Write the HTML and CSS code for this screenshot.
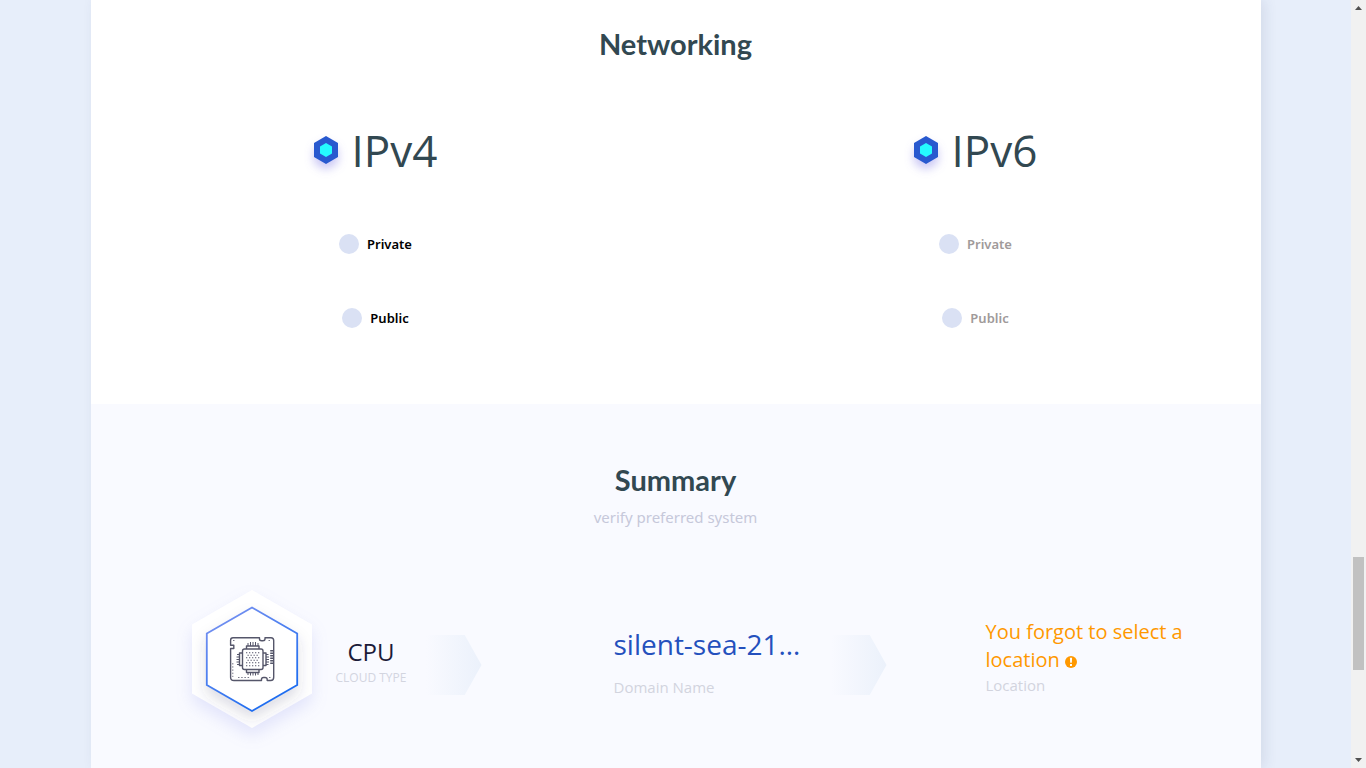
FILE: index.html
```html
<!DOCTYPE html>
<html lang="en">
<head>
<meta charset="utf-8">
<title>Networking and Summary</title>
<link rel="stylesheet" href="styles.css">
</head>
<body>
<div class="viewport">
  <main class="content">
    <div class="sheet">
      <section class="networking">
        <h2 class="title">Networking</h2>
        <div class="protocols">
          <fieldset class="protocol">
            <legend class="protocol-name">
              <svg class="bullet" width="24" height="28" viewBox="0 0 24 28" aria-hidden="true"><path fill="#2859cf" d="M12 0l12 7v14l-12 7L0 21V7z"/><path fill="#25fcff" d="M12 7l6 3.500v7L12 21l-6-3.500v-7z"/></svg>
              <span>IPv4</span>
            </legend>
            <label class="option"><input type="radio" name="ipv4"><span>Private</span></label>
            <label class="option"><input type="radio" name="ipv4"><span>Public</span></label>
          </fieldset>
          <fieldset class="protocol muted">
            <legend class="protocol-name">
              <svg class="bullet" width="24" height="28" viewBox="0 0 24 28" aria-hidden="true"><path fill="#2859cf" d="M12 0l12 7v14l-12 7L0 21V7z"/><path fill="#25fcff" d="M12 7l6 3.500v7L12 21l-6-3.500v-7z"/></svg>
              <span>IPv6</span>
            </legend>
            <label class="option"><input type="radio" name="ipv6"><span>Private</span></label>
            <label class="option"><input type="radio" name="ipv6"><span>Public</span></label>
          </fieldset>
        </div>
      </section>
      <section class="summary">
        <h2 class="title">Summary</h2>
        <p class="subtitle">verify preferred system</p>
        <div class="steps">
          <div class="step cloud">
            <svg class="badge" width="120" height="138" viewBox="0 0 120 138" aria-hidden="true">
              <defs>
                <linearGradient id="edge" x1="0" y1="0" x2="0.6" y2="1"><stop offset="0" stop-color="#7f94f0"/><stop offset="1" stop-color="#1c6cf0"/></linearGradient>
                <filter id="soft" x="-40%" y="-40%" width="180%" height="180%"><feDropShadow dx="0" dy="8" stdDeviation="7" flood-color="#3a3f6a" flood-opacity="0.17"/></filter>
                <clipPath id="hex"><path d="M60 0l60 34.500v69L60 138 0 103.500v-69z"/></clipPath>
              </defs>
              <path fill="#fff" d="M60 0l60 34.500v69L60 138 0 103.500v-69z"/>
              <g clip-path="url(#hex)"><path fill="#fff" filter="url(#soft)" d="M60 17l46 26v52l-46 26-46-26V43z"/></g>
              <path fill="#fff" stroke="url(#edge)" stroke-width="1.800" d="M60 17.500l45.200 26v51.500L60 121 14.800 95V43.500z"/>
              <g fill="none" stroke="#55566a" stroke-width="1.400" stroke-linejoin="round">
                <path d="M41 47.700h26.500v1.200q0 1.800 2.200 1.800h1q2.300 0 2.300-1.800v-1.200h6q2.700 0 2.700 2.800v36.700q0 3.300-3 3.300h-3.500v-1q0-2-2.200-2h-1.500q-2 0-2 2v1H42q-3.400 0-3.400-3V58.500h3.200v-3.300h-3.200v-5q0-2.500 2.400-2.500z"/>
                <rect x="50.500" y="59" width="20.500" height="20.500" rx="2"/>
                <path d="M54.500 59v-3h12.500v3M54.500 79.500v3h12.500v-3M50.500 63h-3v12.500h3M71 63h3v12.500h-3"/>
                <path d="M56 56v-3M58.500 56v-4M61 56v-4M63.500 56v-4M66 56v-3M56 82.500v2.500M58.500 82.500v3M61 82.500v3M63.500 82.500v3M66 82.500v2.500M47.500 64.500h-2.500M47.500 67h-3M47.500 69.500h-3M47.500 72h-3M47.500 74.500h-2.500M74 64.500h2.500M74 67h3M74 69.500h3M74 72h3M74 74.500h2.500" stroke-width="1"/>
                <path d="M79.700 60v14" stroke-width="3" stroke-dasharray="1.500 1"/>
                <path d="M54 62.800h14M54 67.800h14M54 72.800h14" stroke-width="1.100" stroke-dasharray="1.300 1.700"/>
                <path d="M55.500 65.300h12M55.500 70.300h12M54 75.800h14" stroke-width="1.100" stroke-dasharray="1.300 1.700"/>
                <path d="M46 87.500h12M40.800 73v14M41 50.500h2M76.500 50.500h2M77 87.500h2" stroke-width="0.800" stroke-dasharray="1.500 1.700"/>
              </g>
            </svg>
            <div class="cloud-text"><div class="cloud-value">CPU</div><div class="cloud-caption">CLOUD TYPE</div></div>
            <div class="arrow"></div>
          </div>
          <div class="step domain">
            <div class="domain-text"><div class="domain-value">silent-sea-21…</div><div class="caption">Domain Name</div></div>
            <div class="arrow"></div>
          </div>
          <div class="step location">
            <div class="location-value">You forgot to select a location <svg class="alert" width="12" height="12" viewBox="0 0 12 12" aria-hidden="true"><circle cx="6" cy="6" r="6" fill="#ff9800"/><path fill="#fff" d="M4.900 1.800h2.200l-.3 5H5.200zM5 8h2v2H5z"/></svg></div>
            <div class="caption">Location</div>
          </div>
        </div>
      </section>
    </div>
  </main>
  <div class="scrollbar" aria-hidden="true">
    <svg width="15" height="15" viewBox="0 0 15 15"><path fill="#505050" d="M4 10l3.500-4L11 10z"/></svg>
    <div class="track"><div class="thumb"></div></div>
    <svg width="15" height="15" viewBox="0 0 15 15"><path fill="#505050" d="M4 5l3.500 4L11 5z"/></svg>
  </div>
</div>
</body>
</html>
```
FILE: styles.css
```css
* { box-sizing: border-box; }
body {
  margin: 0;
  font-family: "Open Sans", "Noto Sans", sans-serif;
  background: #e7eefa;
}
.viewport { display: flex; height: 100vh; overflow: hidden; }
.content { flex: 1; overflow: hidden; }
.sheet {
  max-width: 1170px;
  min-height: 100vh;
  margin: 0 auto;
  display: flex;
  flex-direction: column;
  background: #fff;
  box-shadow: 4px 0 12px rgba(50, 60, 100, 0.1);
}
.title {
  margin: 0;
  text-align: center;
  font-family: Lato, "Open Sans", sans-serif;
  font-size: 29px;
  line-height: 40px;
  font-weight: 700;
  color: #324851;
}
.networking { padding: 24px 0 76px; }
.protocols { display: grid; grid-template-columns: 1fr 1fr; margin: 56px -15px 0; }
.protocol {
  margin: 0;
  padding: 0;
  border: 0;
  min-width: 0;
  display: flex;
  flex-direction: column;
  align-items: center;
}
.protocol-name {
  display: flex;
  align-items: center;
  gap: 14px;
  margin: 0 auto;
  padding: 0;
  font-size: 44px;
  line-height: 60px;
  font-weight: 400;
  color: #324851;
}
.bullet { overflow: visible; filter: drop-shadow(0 6px 5px rgba(80, 70, 220, 0.3)); }
.option {
  display: flex;
  align-items: center;
  gap: 8px;
  margin-top: 54px;
  font-family: "Noto Sans", "Open Sans", sans-serif;
  font-size: 13px;
  line-height: 20px;
  font-weight: 600;
  color: #000;
}
.muted .option { color: #a09a9a; }
.option input {
  appearance: none;
  width: 20px;
  height: 20px;
  margin: 0;
  border-radius: 50%;
  background: #dae1f4;
}
.summary { flex: 1; padding-top: 56px; background: #f9faff; }
.subtitle {
  margin: 5px 0 0;
  text-align: center;
  font-family: "Noto Sans", "Open Sans", sans-serif;
  font-size: 15px;
  line-height: 24px;
  color: #c6c8da;
}
.steps { display: grid; grid-template-columns: 9fr 9fr 8fr; margin-top: 61px; }
.step { min-width: 0; }
.cloud, .domain { display: flex; align-items: center; padding-right: 14px; }
.cloud { padding-left: 101px; }
.badge { flex: none; overflow: visible; filter: drop-shadow(0 8px 8px rgba(90, 100, 230, 0.14)); }
.cloud-text { margin: 5px 0 0 24px; text-align: center; white-space: nowrap; }
.cloud-value { font-size: 24px; line-height: 32px; color: #1b1b38; }
.cloud-caption { font-size: 12px; line-height: 20px; color: #d3d5df; }
.arrow {
  flex: none;
  width: 56px;
  height: 60px;
  margin: 12px 0 0 auto;
  background: linear-gradient(90deg, #f9faff, #ebf1fb);
  clip-path: polygon(0 0, 70% 0, 100% 50%, 70% 100%, 0 100%);
}
.domain { padding-left: 118px; }
.domain-text { margin-top: 4px; white-space: nowrap; }
.domain-value { font-size: 28px; line-height: 40px; color: #2450bd; }
.caption { font-size: 15px; line-height: 22px; color: #d2d4de; }
.domain .caption { margin-top: 12px; }
.location { padding: 28px 70px 0 85px; }
.location-value { font-size: 20px; line-height: 28px; color: #ff9800; }
.alert { vertical-align: -1px; }
.scrollbar { flex: none; width: 15px; display: flex; flex-direction: column; background: #f1f1f1; }
.track { flex: 1; display: grid; grid-template-rows: 542fr 113fr 83fr; }
.thumb { grid-row: 2; margin: 0 2px; background: #c1c1c1; }
```
